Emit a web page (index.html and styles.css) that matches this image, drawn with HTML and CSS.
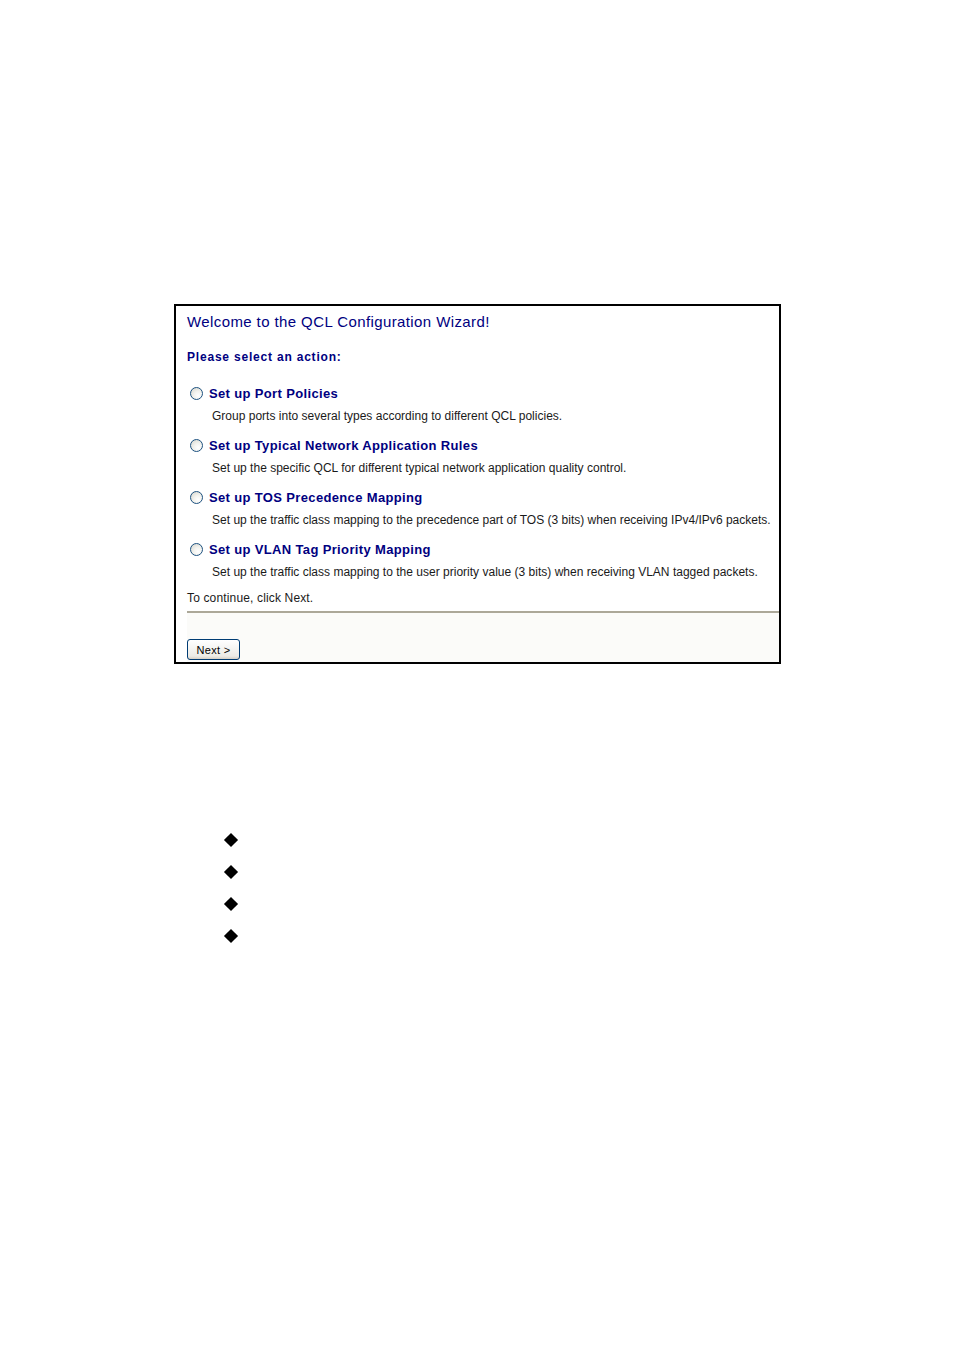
FILE: index.html
```html
<!DOCTYPE html>
<html>
<head>
<meta charset="utf-8">
<title>QCL Configuration Wizard</title>
<link rel="stylesheet" href="styles.css">
</head>
<body>
<div class="page">
  <div class="wizard">
    <div class="wizard-body">
      <div class="title">Welcome to the QCL Configuration Wizard!</div>
      <div class="prompt">Please select an action:</div>
      <div class="option">
        <div class="option-row"><span class="radio"></span><span class="option-label">Set up Port Policies</span></div>
        <div class="option-desc">Group ports into several types according to different QCL policies.</div>
      </div>
      <div class="option">
        <div class="option-row"><span class="radio"></span><span class="option-label">Set up Typical Network Application Rules</span></div>
        <div class="option-desc">Set up the specific QCL for different typical network application quality control.</div>
      </div>
      <div class="option">
        <div class="option-row"><span class="radio"></span><span class="option-label">Set up TOS Precedence Mapping</span></div>
        <div class="option-desc">Set up the traffic class mapping to the precedence part of TOS (3 bits) when receiving IPv4/IPv6 packets.</div>
      </div>
      <div class="option">
        <div class="option-row"><span class="radio"></span><span class="option-label">Set up VLAN Tag Priority Mapping</span></div>
        <div class="option-desc">Set up the traffic class mapping to the user priority value (3 bits) when receiving VLAN tagged packets.</div>
      </div>
      <div class="continue">To continue, click Next.</div>
    </div>
    <div class="wizard-footer">
      <button class="btn" type="button">Next &gt;</button>
    </div>
  </div>
  <ul class="bullets">
    <li><span class="diamond"></span></li>
    <li><span class="diamond"></span></li>
    <li><span class="diamond"></span></li>
    <li><span class="diamond"></span></li>
  </ul>
</div>
</body>
</html>
```

FILE: styles.css
```css
html, body {
  margin: 0;
  padding: 0;
  background: #ffffff;
}

.page {
  padding-top: 304px;
  padding-left: 174px;
  font-family: "Liberation Sans", Arial, sans-serif;
}

.wizard {
  box-sizing: border-box;
  width: 607px;
  height: 360px;
  border: 2px solid #000;
  background: #fff;
  display: flex;
  flex-direction: column;
  overflow: hidden;
}

.wizard-body {
  padding: 7px 0 0 11px;
  white-space: nowrap;
}

.title {
  font-size: 15px;
  line-height: 18px;
  color: #000080;
  letter-spacing: 0.4px;
}

.prompt {
  margin-top: 18px;
  font-size: 12px;
  line-height: 16px;
  font-weight: bold;
  color: #000080;
  letter-spacing: 0.8px;
}

.option {
  margin-top: 19px;
}

.option + .option {
  margin-top: 12px;
}

.option-row {
  display: flex;
  align-items: center;
  height: 18px;
}

.radio {
  box-sizing: border-box;
  width: 13px;
  height: 13px;
  margin-left: 3px;
  margin-right: 6px;
  border-radius: 50%;
  border: 1px solid #1c5180;
  background: radial-gradient(circle at 65% 70%, #ffffff 0%, #f3f3ef 40%, #d4d3ca 100%);
}

.option-label {
  font-size: 13px;
  font-weight: bold;
  color: #000080;
  letter-spacing: 0.35px;
}

.option-desc {
  margin-top: 6px;
  margin-left: 25px;
  font-size: 12px;
  line-height: 16px;
  color: #1a1a1a;
  letter-spacing: 0.01px;
}

.continue {
  margin-top: 10px;
  font-size: 12px;
  line-height: 16px;
  color: #1a1a1a;
  letter-spacing: 0.15px;
}

.wizard-footer {
  flex: 1;
  margin-top: 5px;
  margin-left: 11px;
  border-top: 2px solid #aca899;
  background: #fbfbf9;
  padding-top: 26px;
}

.btn {
  box-sizing: border-box;
  width: 53px;
  height: 21px;
  padding: 0;
  border: 1px solid #003c74;
  border-radius: 3px;
  background: linear-gradient(#ffffff, #ecebe6 85%, #d6d0c5);
  font-family: "Liberation Sans", Arial, sans-serif;
  font-size: 11px;
  letter-spacing: 0.3px;
  color: #000;
  display: block;
}

.bullets {
  list-style: none;
  margin: 168px 0 0 50px;
  padding: 2px 0 2px;
  display: flex;
  flex-direction: column;
  gap: 20px;
}

.bullets li {
  height: 12px;
  display: flex;
  align-items: center;
  justify-content: center;
  width: 14px;
}

.diamond {
  display: block;
  width: 10px;
  height: 10px;
  background: #000;
  transform: rotate(45deg);
}
```
